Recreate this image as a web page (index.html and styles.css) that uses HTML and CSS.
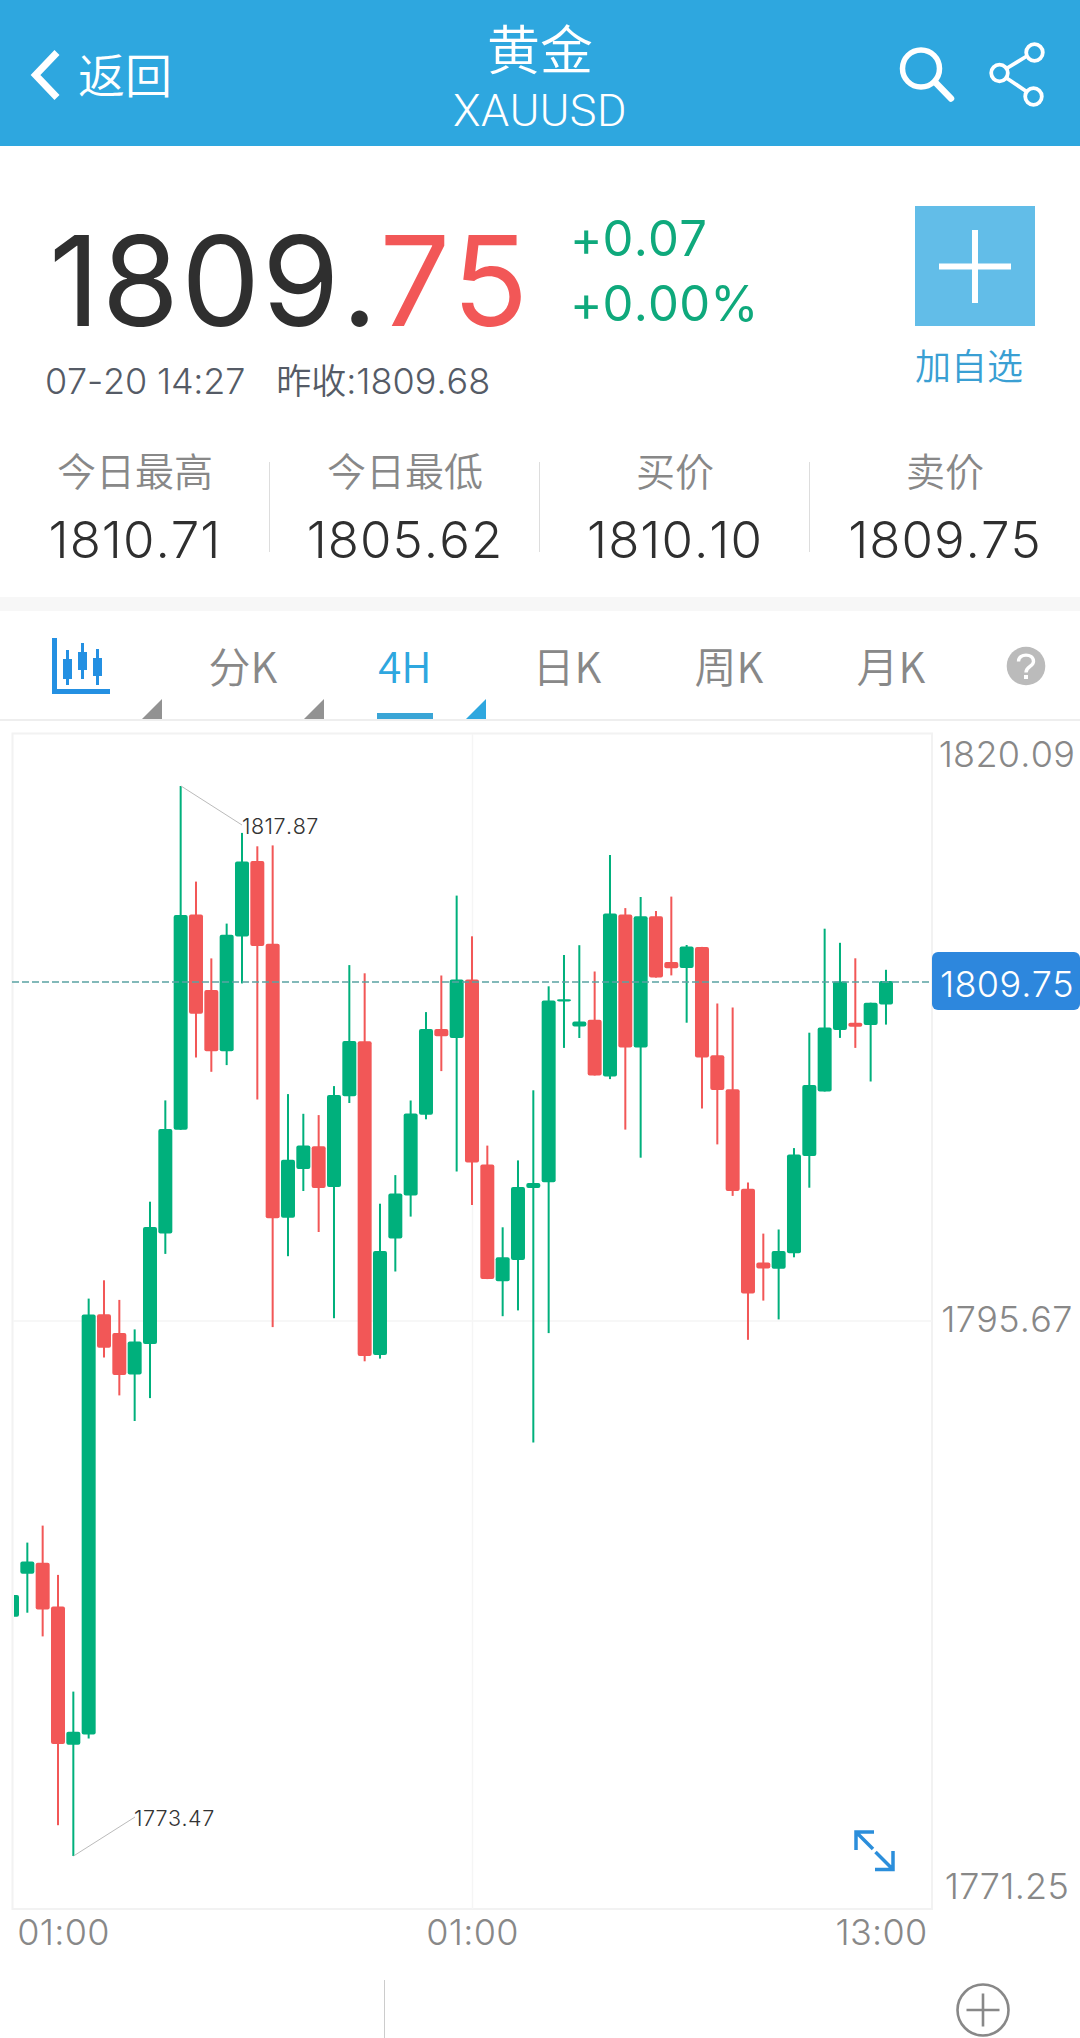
FILE: index.html
```html
<!DOCTYPE html>
<html lang="zh-CN">
<head>
    <meta charset="UTF-8">
    <meta name="viewport" content="width=device-width, initial-scale=1.0">
    <title>黄金 XAUUSD</title>
    <link rel="stylesheet" href="styles.css">
</head>
<body>
    <header class="nav">
        <div class="nav-back">
            <svg width="30" height="54" viewBox="0 0 30 54"><path d="M27 4.500 L5.500 27 L27 49.500" fill="none" stroke="#fff" stroke-width="7"/></svg>
            <span>返回</span>
        </div>
        <div class="nav-title">
            <h1>黄金</h1>
            <p>XAUUSD</p>
        </div>
        <svg class="nav-icons" width="150" height="80" viewBox="896 35 150 80" fill="none" stroke="#fff">
            <circle cx="921" cy="68.500" r="18.500" stroke-width="5.500"/>
            <path d="M935 82 L951 98.500" stroke-width="6.500" stroke-linecap="round"/>
            <g stroke-width="3.800">
                <circle cx="999.500" cy="73" r="8.300"/>
                <circle cx="1034.500" cy="52.500" r="8.300"/>
                <circle cx="1033.500" cy="96.500" r="8.300"/>
                <path d="M1006.500 68.500 L1027 56 M1006.500 78 L1026.500 91.500"/>
            </g>
        </svg>
    </header>

    <main>
        <!-- 报价 -->
        <section class="quote">
            <div class="price-box">
                <div class="price">1809.<span>75</span></div>
                <div class="price-info"><span class="time">07-20 14:27</span><span><i>昨收</i>:1809.68</span></div>
            </div>
            <div class="change">
                <p>+0.07</p>
                <p>+0.00%</p>
            </div>
            <div class="add">
                <div class="add-btn">
                    <svg width="120" height="120" viewBox="0 0 120 120"><path d="M24 60.500 H96 M60 24 V97" stroke="#fff" stroke-width="6"/></svg>
                </div>
                <span>加自选</span>
            </div>
        </section>

        <section class="stats">
            <div class="stat"><h3>今日最高</h3><p>1810.71</p></div>
            <div class="stat"><h3>今日最低</h3><p>1805.62</p></div>
            <div class="stat"><h3>买价</h3><p>1810.10</p></div>
            <div class="stat"><h3>卖价</h3><p>1809.75</p></div>
        </section>

        <!-- 周期切换 -->
        <nav class="tabs">
            <div class="tab more">
                <svg width="58" height="56" viewBox="52 638 58 56" fill="#2490e2">
                    <path d="M52 638 h5 v51 h53 v5 h-58 z"/>
                    <path d="M66 650 h3 v9 h3 v20 h-3 v6 h-3 v-6 h-3 v-20 h3 z"/>
                    <path d="M81 643 h3 v9 h3 v18 h-3 v9 h-3 v-9 h-3 v-18 h3 z"/>
                    <path d="M96 649 h3 v9 h3 v18 h-3 v9 h-3 v-9 h-3 v-18 h3 z"/>
                </svg>
            </div>
            <div class="tab more"><span>分K</span></div>
            <div class="tab more active"><span>4H</span></div>
            <div class="tab"><span>日K</span></div>
            <div class="tab"><span>周K</span></div>
            <div class="tab"><span>月K</span></div>
            <div class="help">
                <svg width="40" height="40" viewBox="0 0 40 40">
                    <circle cx="20" cy="20" r="19.300" fill="#bbb"/>
                    <path d="M12.500 15.500 C12.500 7 27.500 7 27.500 15.500 C27.500 20.500 20 20.500 20 26.500" fill="none" stroke="#fff" stroke-width="3.400"/>
                    <rect x="18" y="29" width="4" height="4" fill="#fff"/>
                </svg>
            </div>
        </nav>

        <!-- K线图 -->
        <svg class="chart" width="1080" height="1240" viewBox="0 721 1080 1240">
            <defs>
                <clipPath id="plot"><rect x="14" y="735" width="918" height="1174"/></clipPath>
            </defs>
            <rect class="frame" x="12.500" y="733.500" width="919.500" height="1175.500"/>
            <path class="grid" d="M13 1321 H932 M472.500 734 V1909"/>
            <g id="candles" clip-path="url(#plot)"></g>
            <path class="last-line" d="M12 982 H932"/>

            <path class="leader" d="M181 786 L242 825 M73.500 1856 L135 1817"/>
            <text class="mark" x="242" y="834">1817.87</text>
            <text class="mark" x="134" y="1826">1773.47</text>

            <text class="axis" x="1007" y="767">1820.09</text>
            <text class="axis" x="1007" y="1332">1795.67</text>
            <text class="axis" x="1007" y="1899">1771.25</text>
            <rect x="932" y="952" width="148" height="58" rx="6" fill="#2d87dd"/>
            <text class="axis axis-last" x="1007" y="997">1809.75</text>

            <text class="axis" x="63.500" y="1945">01:00</text>
            <text class="axis" x="472.500" y="1945">01:00</text>
            <text class="axis" x="881.500" y="1945">13:00</text>

            <path class="expand" d="M856 1850 V1832 H874 M856 1832 L873 1849 M893 1851 V1869.500 H875 M893 1869.500 L875.500 1852"/>
        </svg>
    </main>

    <footer class="bottom">
        <div class="bottom-left"></div>
        <svg width="56" height="56" viewBox="0 0 56 56" fill="none" stroke="#888" stroke-width="2.600">
            <circle cx="28" cy="28" r="25.500"/>
            <path d="M11.500 28 H44.500 M28 11.500 V44.500"/>
        </svg>
    </footer>

    <script>
        // [影线上端, 影线下端, 实体上端, 实体下端, 涨跌(1涨 0跌)]
        const data = [
            [1595, 1616.7, 1595, 1616.7, 1],
            [1542.6, 1612.7, 1561.5, 1573.7, 1],
            [1525.6, 1636.4, 1562.7, 1609.6, 0],
            [1574.9, 1825.2, 1606.4, 1744, 0],
            [1691.6, 1856, 1731.8, 1744.8, 1],
            [1298.6, 1738.5, 1314.6, 1734.5, 1],
            [1280.3, 1357.5, 1314.2, 1347.7, 0],
            [1299.9, 1395.4, 1333, 1374.9, 0],
            [1329.4, 1421, 1341.4, 1374.5, 1],
            [1201.7, 1398.1, 1227.1, 1344.1, 1],
            [1100.4, 1253.9, 1128.9, 1233.4, 1],
            [786, 1129.8, 915.1, 1129.8, 1],
            [881.6, 1057.5, 914.6, 1013.8, 0],
            [958.4, 1071.8, 990.1, 1051.3, 0],
            [923.6, 1065.1, 934.7, 1051.3, 1],
            [832.9, 983.4, 861.5, 936.5, 1],
            [846.3, 1099.5, 861.1, 945.9, 0],
            [845.4, 1327.1, 943.7, 1218.2, 0],
            [1094.1, 1256.2, 1159.7, 1217.8, 1],
            [1113.8, 1191, 1145.4, 1169.1, 1],
            [1115.1, 1232, 1146.3, 1187.9, 0],
            [1086.1, 1318.2, 1095, 1187, 1],
            [965.1, 1103, 1041, 1096.3, 1],
            [973.3, 1361.3, 1041.2, 1355.9, 0],
            [1203.7, 1358.6, 1251, 1355, 1],
            [1175.1, 1271.5, 1193.4, 1238.5, 1],
            [1100.5, 1216.6, 1113.5, 1195.6, 1],
            [1012.1, 1119.3, 1029.1, 1114.8, 1],
            [975.5, 1071.1, 1029.1, 1036.3, 0],
            [895.6, 1171.5, 979.6, 1038, 1],
            [936.3, 1205, 979.6, 1162.6, 0],
            [1145.6, 1279.1, 1164.4, 1279.1, 0],
            [1227.3, 1316.2, 1257.2, 1281.3, 1],
            [1160.4, 1310.4, 1187.1, 1259.9, 1],
            [1090.3, 1442.5, 1183.1, 1188, 1],
            [986.3, 1333.1, 1000.5, 1182.2, 1],
            [955, 1047.9, 999.2, 1001.4, 1],
            [945.2, 1038, 1021.5, 1026.4, 1],
            [971.5, 1075.5, 1019.7, 1075.5, 0],
            [855, 1079.1, 913.5, 1076.4, 1],
            [908.1, 1129.6, 914.4, 1047.4, 0],
            [897, 1157.7, 916.2, 1047.4, 1],
            [911, 977.6, 916.2, 977.6, 0],
            [896.6, 975.4, 962, 968.3, 0],
            [945, 1022.7, 946.5, 968, 1],
            [946.9, 1108.5, 946.9, 1057.5, 0],
            [1003.5, 1144.4, 1055.3, 1090, 0],
            [1007.5, 1195.9, 1089.3, 1191, 0],
            [1182.5, 1339.8, 1188.8, 1293.5, 0],
            [1233.6, 1300.6, 1262.5, 1268.4, 0],
            [1229.5, 1319.4, 1251, 1268.7, 1],
            [1148.1, 1257.3, 1154.4, 1253.2, 1],
            [1032.7, 1187.7, 1084.9, 1155.9, 1],
            [928.7, 1091.5, 1027.5, 1091.5, 1],
            [942.8, 1037.9, 981.6, 1030.1, 1],
            [958.3, 1047.9, 1022.7, 1026.8, 0],
            [1002.7, 1081.5, 1002.7, 1024.9, 1],
            [969.8, 1024.6, 980.9, 1004.6, 1]
        ];

        const step = 15.333;
        let html = '';
        data.forEach((d, i) => {
            const x = 12 + i * step;
            const cls = d[4] ? 'up' : 'down';
            html += `<g class="${cls}">
                <rect x="${x - 1}" y="${d[0]}" width="2" height="${d[1] - d[0]}"/>
                <rect x="${x - 7}" y="${d[2]}" width="14" height="${d[3] - d[2]}" rx="2"/>
            </g>`;
        });
        document.getElementById('candles').innerHTML = html;
    </script>
</body>
</html>
```
FILE: styles.css
```css
* {
    margin: 0;
    padding: 0;
    box-sizing: border-box;
}

body {
    width: 1080px;
    height: 2038px;
    overflow: hidden;
    background: #fff;
    color: #2f2f2f;
    font-family: Inter, "Noto Sans CJK SC", sans-serif;
    font-weight: 300;
    font-kerning: none;
    font-feature-settings: "calt" 0;
}

svg {
    display: block;
}

i {
    font-style: normal;
}

/* 导航栏 */
.nav {
    height: 146px;
    padding: 3px 34px 0 30px;
    background: #2ea7df;
    color: #fff;
    font-family: "Noto Sans CJK SC", sans-serif;
    font-weight: 350;
    display: grid;
    grid-template-columns: 1fr auto 1fr;
    align-items: center;
}

.nav-back {
    display: flex;
    align-items: center;
    gap: 18px;
    font-size: 47px;
    line-height: 60px;
}

.nav-back span {
    margin-bottom: 3px;
}

.nav-title {
    padding-left: 4px;
    text-align: center;
}

.nav-title h1 {
    font-size: 53px;
    font-weight: 350;
    line-height: 66px;
}

.nav-title p {
    font-family: Roboto, sans-serif;
    font-size: 45px;
    font-weight: 300;
    letter-spacing: 0.5px;
    line-height: 50px;
    padding-top: 6px;
}

.nav-icons {
    justify-self: end;
}

/* 报价 */
.quote {
    height: 292px;
    padding: 60px 45px 0 46px;
    display: flex;
}

.price-box {
    width: 524px;
}

.price {
    padding-left: 3px;
    font-size: 125px;
    font-weight: 400;
    letter-spacing: 2px;
    line-height: 149px;
    white-space: nowrap;
}

.price span {
    color: #f25757;
}

.price-info {
    display: flex;
    gap: 31px;
    font-size: 36px;
    line-height: 44px;
    margin-top: 4px;
    margin-left: -1px;
    color: #555b66;
    white-space: nowrap;
}

.price-info i {
    font-size: 35px;
    font-weight: 350;
}

.time {
    letter-spacing: -0.2px;
}

.change {
    flex: 1;
    font-size: 49px;
    font-weight: 400;
    letter-spacing: 0.2px;
    line-height: 65px;
    color: #0fa97c;
}

.add {
    width: 120px;
    font-size: 36px;
    font-weight: 350;
    line-height: 48px;
    color: #3a9fd3;
    font-family: "Noto Sans CJK SC", sans-serif;
}

.add-btn {
    background: #62bde8;
    margin-bottom: 14px;
}

.stats {
    height: 173px;
    border-bottom: 14px solid #f7f7f7;
    display: grid;
    grid-template-columns: repeat(4, 1fr);
    text-align: center;
}

.stat {
    height: 120px;
    position: relative;
}

.stat + .stat::before {
    content: '';
    position: absolute;
    left: -1px;
    top: 24px;
    width: 1px;
    height: 90px;
    background: #ddd;
}

.stat h3 {
    font-size: 39px;
    font-weight: 350;
    line-height: 56px;
    padding-top: 6px;
    color: #888;
}

.stat p {
    font-size: 51px;
    letter-spacing: 1px;
    line-height: 60px;
    margin-top: 10px;
}

/* 周期切换 */
.tabs {
    height: 110px;
    border-bottom: 2px solid #eee;
    display: grid;
    grid-template-columns: repeat(6, 162px) 1fr;
    font-family: "Noto Sans CJK SC", sans-serif;
    font-size: 42px;
    font-weight: 350;
    color: #888;
}

.tab {
    position: relative;
    display: flex;
    align-items: center;
    justify-content: center;
}

.tab svg {
    margin-top: 2px;
}

.tab span {
    margin-bottom: 2px;
}

.more::after {
    content: '';
    position: absolute;
    right: 0;
    bottom: 0;
    border-left: 20px solid transparent;
    border-bottom: 20px solid #929292;
}

.active {
    color: #2ea7df;
}

.active::before {
    content: '';
    position: absolute;
    left: 53px;
    bottom: 0;
    width: 56px;
    height: 6px;
    background: #3aa5d6;
}

.active::after {
    border-bottom-color: #2ea7df;
}

.help {
    padding-top: 2px;
    display: flex;
    align-items: center;
    justify-content: center;
}

/* K线图 */
.frame {
    fill: none;
    stroke: #f2f2f2;
    stroke-width: 2;
}

.grid {
    stroke: #f5f5f5;
    stroke-width: 1.5;
}

.up {
    fill: #00b07c;
}

.down {
    fill: #f25757;
}

.last-line {
    stroke: #5aa3a3;
    stroke-width: 1.5;
    stroke-dasharray: 7 3;
}

.leader {
    stroke: #bbb;
    stroke-width: 1;
}

.mark {
    font-size: 21.5px;
    font-weight: 350;
    letter-spacing: 0.5px;
    fill: #333;
}

.axis {
    font-size: 36px;
    letter-spacing: 0.3px;
    text-anchor: middle;
    fill: #888;
}

.axis-last {
    fill: #fff;
}

.expand {
    fill: none;
    stroke: #2b8edb;
    stroke-width: 3.5;
}

/* 底部 */
.bottom {
    height: 77px;
    display: flex;
    align-items: flex-end;
    gap: 570px;
}

.bottom-left {
    width: 385px;
    height: 58px;
    border-right: 1px solid #ccc;
}
```
